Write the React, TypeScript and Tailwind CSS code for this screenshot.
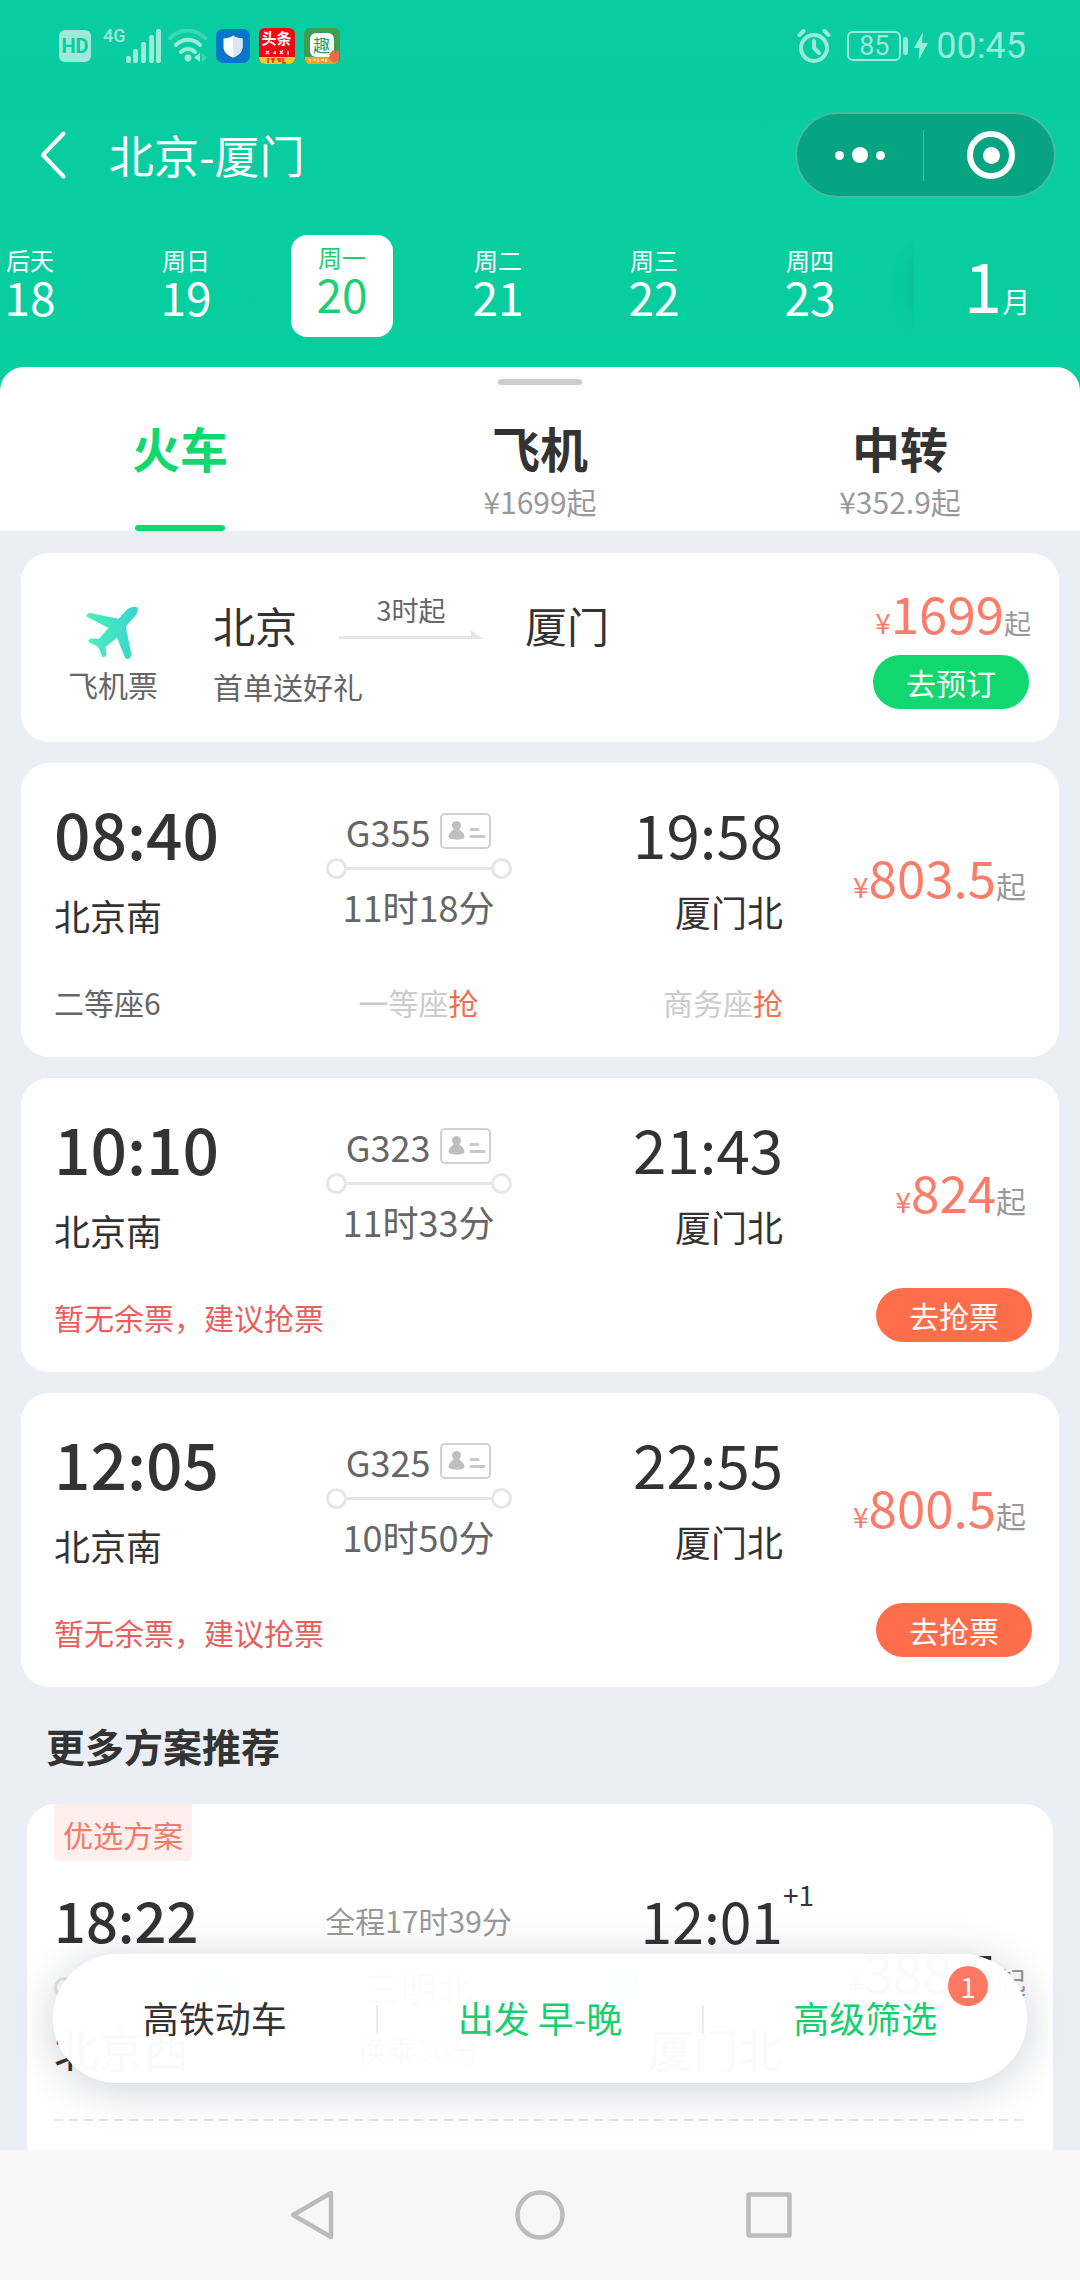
import { useState } from 'react';
import clsx from 'clsx';

type Seat = {
  name: string;
  left?: number;
};

type Train = {
  no: string;
  depart: string;
  from: string;
  arrive: string;
  to: string;
  duration: string;
  price: string;
  seats: Seat[];
};

const days = [
  { label: '后天', day: 18 },
  { label: '周日', day: 19 },
  { label: '周一', day: 20 },
  { label: '周二', day: 21 },
  { label: '周三', day: 22 },
  { label: '周四', day: 23 },
];

const tabs = [
  { name: '火车', sub: '' },
  { name: '飞机', sub: '¥1699起' },
  { name: '中转', sub: '¥352.9起' },
];

const trains: Train[] = [
  {
    no: 'G355',
    depart: '08:40',
    from: '北京南',
    arrive: '19:58',
    to: '厦门北',
    duration: '11时18分',
    price: '803.5',
    seats: [{ name: '二等座', left: 6 }, { name: '一等座' }, { name: '商务座' }],
  },
  {
    no: 'G323',
    depart: '10:10',
    from: '北京南',
    arrive: '21:43',
    to: '厦门北',
    duration: '11时33分',
    price: '824',
    seats: [],
  },
  {
    no: 'G325',
    depart: '12:05',
    from: '北京南',
    arrive: '22:55',
    to: '厦门北',
    duration: '10时50分',
    price: '800.5',
    seats: [],
  },
];

const StatusBar = () => (
  <div className="flex h-[92px] items-center justify-between pr-[54px] pl-[59px] text-white/60">
    <div className="flex items-center">
      <span className="flex h-8 w-8 items-center justify-center rounded-md bg-white/60 font-['Roboto',sans-serif] text-[20px] leading-none font-bold text-[#08cda0]">
        HD
      </span>
      <span className="ml-3 self-start font-['Roboto',sans-serif] text-[18px] leading-4 font-medium">4G</span>
      <svg className="h-[34px] w-9" viewBox="0 0 36 34" fill="currentColor">
        <rect x="0" y="27" width="5" height="7" rx="2" />
        <rect x="7" y="20" width="5" height="14" rx="2" />
        <rect x="15" y="13" width="5" height="21" rx="2" />
        <rect x="23" y="6" width="5" height="28" rx="2" />
        <rect x="30" y="0" width="5" height="34" rx="2" />
      </svg>
      <svg className="ml-1.5 h-[34px] w-10" viewBox="0 0 40 34" fill="none" stroke="currentColor" strokeWidth="4" strokeLinecap="round">
        <path d="M2 9C12-1 27-1 37 9" opacity="0.35" />
        <path d="M8 16c7-7 17-7 24 0" />
        <path d="M13 23c4-4 10-4 14 0" />
        <circle cx="20" cy="29" r="3.4" fill="currentColor" stroke="none" />
        <path d="M32 24v9l-6-4.500z" fill="currentColor" stroke="none" />
        <path d="M34 24v9l5-4.500z" fill="currentColor" stroke="none" opacity="0.35" />
      </svg>
      <svg className="ml-2 h-[34px] w-[34px]" viewBox="0 0 34 34">
        <rect width="34" height="34" rx="7" fill="#0576c9" />
        <path d="M17 6.500c3 2.200 6 3 9.500 3V18c0 5-4 8.500-9.500 10.500C11.500 26.500 7.500 23 7.500 18V9.500c3.500 0 6.500-.8 9.500-3z" fill="#fff" />
        <path d="M17 6.500c3 2.200 6 3 9.500 3V18c0 5-4 8.500-9.500 10.500z" fill="#dbe6f3" />
      </svg>
      <span className="ml-[9px] flex h-9 w-9 flex-col items-center overflow-hidden rounded-md bg-[#ee0a12] text-white">
        <span className="text-[15px] leading-5 font-bold">头条</span>
        <svg className="w-full" viewBox="0 0 36 16">
          <path d="M7 3l3 3M10 3l-3 3M14 5h3M16 3v3M21 3l3 3M24 2l-3 4M29 3v4" stroke="#fff" strokeWidth="1.200" />
          <rect y="9" width="36" height="7" fill="#ffc736" />
          <path d="M9 10v5M12 11h4M14 11v4M18 11h4M19 13h3M24 10v5h3" stroke="#e3261b" strokeWidth="1.500" fill="none" />
        </svg>
      </span>
      <span className="relative ml-[9px] flex h-9 w-9 justify-center rounded-md bg-[#3f9c50] pt-[5px]">
        <span className="h-6 w-6 rounded-md bg-white text-center text-[17px] leading-6 text-[#2f9b4f]">趣</span>
        <svg className="absolute inset-x-0 bottom-0 w-full" viewBox="0 0 36 16">
          <path d="M1 9h28l5 2v3l-3 2H4l-3-3z" fill="#f2a32b" />
          <path d="M26 5l3-3 2 2 4-1v9l-5 3-5-4z" fill="#ee6a45" />
          <path d="M6 11v3M9 12h3M14 11v3M17 12h3M22 11v3" stroke="#fff" strokeWidth="1.200" />
        </svg>
      </span>
    </div>
    <div className="flex items-center">
      <svg className="h-[34px] w-[34px]" viewBox="0 0 34 34" fill="none" stroke="currentColor" strokeWidth="4" strokeLinecap="round">
        <circle cx="17" cy="19" r="13" />
        <path d="M17 12v7l5 5" />
        <path d="M2.500 6l4-4M31.500 6l-4-4" />
      </svg>
      <span className="ml-4 flex h-[30px] w-[54px] items-center justify-center rounded-md border-2 border-white/60 font-['Roboto',sans-serif] text-[27px] leading-none">
        85
      </span>
      <span className="ml-0.5 h-[18px] w-[5px] rounded-sm bg-white/60" />
      <svg className="ml-1.5 h-7 w-[14px]" viewBox="0 0 14 28" fill="currentColor">
        <path d="M9 0L0 16h5.500L4.500 28 14 11H8z" />
      </svg>
      <span className="ml-2 font-['Roboto',sans-serif] text-[36px] leading-none">00:45</span>
    </div>
  </div>
);

const TitleBar = () => (
  <div className="flex h-[126px] items-center pr-6 pl-10 text-white">
    <button aria-label="返回">
      <svg className="block h-12 w-[26px]" viewBox="0 0 26 48" fill="none" stroke="currentColor" strokeWidth="4" strokeLinecap="round" strokeLinejoin="round">
        <path d="M23.500 2.500L3 24l20.500 21.500" />
      </svg>
    </button>
    <h1 className="ml-[43px] text-[45px] leading-[60px]">北京-厦门</h1>
    <div className="ml-auto flex h-[86px] w-[261px] items-center rounded-full border-2 border-white/25 bg-black/20">
      <button aria-label="更多" className="flex flex-1 items-center justify-center gap-2">
        <i className="h-[9px] w-[9px] rounded-full bg-white" />
        <i className="h-4 w-4 rounded-full bg-white" />
        <i className="h-[9px] w-[9px] rounded-full bg-white" />
      </button>
      <span className="h-[51px] w-px bg-white/25" />
      <button aria-label="关闭" className="flex flex-1 justify-center pl-1">
        <span className="flex h-12 w-12 items-center justify-center rounded-full border-6 border-white">
          <i className="h-[17px] w-[17px] rounded-full bg-white" />
        </span>
      </button>
    </div>
  </div>
);

const IdCardIcon = () => (
  <svg className="h-9 w-[51px]" viewBox="0 0 51 36" fill="none">
    <rect x="1" y="1" width="49" height="34" rx="4" stroke="#d0d0d0" strokeWidth="2" />
    <circle cx="16.500" cy="12.500" r="4.500" fill="#bfbfbf" />
    <path d="M14.500 15h4c.3 2 6 4 6 9 0 3.500-16 3.500-16 0 0-5 5.700-7 6-9z" fill="#bfbfbf" />
    <path d="M31 16.500h7M31 23.500h13" stroke="#c8c8c8" strokeWidth="3" strokeLinecap="round" />
  </svg>
);

const TransferIcon = () => (
  <svg className="h-9 w-9" viewBox="0 0 36 36" fill="none" stroke="#33d6b0" strokeWidth="4">
    <circle cx="18" cy="18" r="15" />
    <path d="M11 15h14M18 15v8" />
  </svg>
);

const RouteLine = () => (
  <div className="flex w-[186px] items-center">
    <i className="h-[21px] w-[21px] rounded-full border-3 border-[#e6e6e6]" />
    <i className="h-[3px] flex-1 bg-[#e6e6e6]" />
    <i className="h-[21px] w-[21px] rounded-full border-3 border-[#e6e6e6]" />
  </div>
);

const FlightCard = () => (
  <article className="flex rounded-[28px] bg-white pt-[29px] pr-[30px] pb-[33px] pl-[33px]">
    <div className="mt-6 flex w-[118px] flex-col items-center">
      <svg className="h-[54px] w-[54px]" viewBox="0 0 54 54">
        <defs>
          <linearGradient id="plane" x1="0" y1="0" x2="1" y2="0">
            <stop offset="0" stopColor="#4fefb6" />
            <stop offset="0.700" stopColor="#3cdccb" />
            <stop offset="1" stopColor="#3ad6cf" />
          </linearGradient>
        </defs>
        <path
          fill="url(#plane)"
          d="M.5 10.500C0 9 2 7 4 7L32.500 12.700 41 3.500C44 .8 49 0 51 1.200 52.500 2.600 52 6 50 9L39.800 20.500 45.400 48.500C45.400 50.500 43.500 53 42 53 40.500 53 39.500 52.500 39 51.500L31 31.700 19.300 41C20 44 20.800 46 20.300 48 19.500 51 17.500 51.500 16.500 51 14.500 48 14.500 44 11.700 41 8.500 37.800 4 38 2.400 35.300 2.400 33.500 4 32.700 5 32.700 8 32 10.500 33.200 12.900 32.700L22.400 22z"
        />
      </svg>
      <span className="mt-1.5 text-[30px] leading-9 text-[#666]">飞机票</span>
    </div>
    <div className="mt-3 ml-[41px] flex-1">
      <div className="flex items-center text-[42px] leading-[60px]">
        <span>北京</span>
        <span className="mx-[42px] flex w-[144px] flex-col items-center pb-4">
          <span className="text-[27px] leading-8 text-[#666]">3时起</span>
          <svg className="mt-1 h-[10px] w-full" viewBox="0 0 144 10" fill="#e6e6e6">
            <path d="M0 6h132V0l12 9H0z" />
          </svg>
        </span>
        <span>厦门</span>
      </div>
      <p className="mt-3 text-[30px] leading-9 text-[#666]">首单送好礼</p>
    </div>
    <div className="flex flex-col items-end">
      <p className="-mr-0.5 flex items-baseline text-[51px] leading-[60px] text-[#fb7d69]">
        <span className="text-[28px] leading-none">¥</span>
        1699
        <span className="text-[27px] leading-none text-[#999]">起</span>
      </p>
      <button className="mt-[13px] h-[54px] w-[156px] rounded-full bg-[#10d86e] text-[30px] leading-none text-white">去预订</button>
    </div>
  </article>
);

const TrainCard = ({ train }: { train: Train }) => (
  <article className="rounded-[28px] bg-white px-[33px] pt-[33px] pb-7">
    <div className="grid grid-cols-4">
      <div>
        <p className="text-[64px] leading-[72px] font-medium">{train.depart}</p>
        <p className="mt-[23px] text-[36px] leading-[48px]">{train.from}</p>
      </div>
      <div className="flex flex-col items-center pt-[11px] text-[36px] leading-[48px] text-[#666]">
        <div className="flex items-center gap-2.5">
          {train.no}
          <IdCardIcon />
        </div>
        <div className="my-[3px]">
          <RouteLine />
        </div>
        <p>{train.duration}</p>
      </div>
      <div className="pt-px text-right">
        <p className="text-[60px] leading-[72px]">{train.arrive}</p>
        <p className="mt-[18px] text-[36px] leading-[48px]">{train.to}</p>
      </div>
      <p className="mt-11 flex items-baseline justify-end text-[51px] leading-[72px] text-[#fb7d69]">
        <span className="text-[28px] leading-none">¥</span>
        {train.price}
        <span className="text-[30px] leading-none text-[#999]">起</span>
      </p>
    </div>
    {train.seats.length > 0 ? (
      <div className="mt-9 grid grid-cols-4 text-[30px] leading-[54px]">
        {train.seats.map((seat, i) => (
          <span
            key={seat.name}
            className={clsx(seat.left ? 'text-[#666]' : 'text-[#ccc]', i === 1 && 'text-center', i === 2 && 'text-right')}
          >
            {seat.name}
            {seat.left ?? <em className="text-[#f2714f] not-italic">抢</em>}
          </span>
        ))}
      </div>
    ) : (
      <div className="mt-[34px] -mr-1.5 flex items-start justify-between text-[30px]">
        <span className="pt-0.5 leading-[54px] text-[#e8605c]">暂无余票，建议抢票</span>
        <button className="h-[54px] w-[156px] rounded-full bg-[#ff6e4a] leading-none text-white">去抢票</button>
      </div>
    )}
  </article>
);

const PlanCard = () => (
  <article className="mx-1.5 rounded-t-[28px] bg-white px-[27px] pb-10">
    <span className="inline-block h-[57px] rounded-b-md bg-[#fff0ee] px-[9px] align-top text-[30px] leading-[60px] text-[#f67a68]">
      优选方案
    </span>
    <div className="mt-[25px] grid grid-cols-4">
      <p className="text-[56px] leading-[66px] font-medium">18:22</p>
      <p className="text-center text-[30px] leading-[69px] text-[#999]">全程17时39分</p>
      <p className="relative text-right text-[57px] leading-[66px]">
        12:01
        <sup className="absolute -top-1.5 left-full text-[28px] leading-none">+1</sup>
      </p>
    </div>
    <div className="mt-2 grid grid-cols-4 items-center text-[36px] leading-[48px] text-[#666]">
      <div className="flex items-center justify-between pr-[65px]">
        <i className="h-[21px] w-[21px] rounded-full border-3 border-[#e6e6e6]" />
        <TransferIcon />
      </div>
      <span className="text-center">三明北</span>
      <div className="pl-[65px]">
        <TransferIcon />
      </div>
      <p className="-mt-4 flex items-baseline justify-end self-start text-[53px] leading-[48px] text-[#333]">
        <span className="text-[28px] leading-none">¥</span>
        388.5
        <span className="text-[30px] leading-none text-[#999]">起</span>
      </p>
    </div>
    <div className="mt-2 grid grid-cols-4 text-[45px] leading-[60px]">
      <span>北京西</span>
      <span className="text-center text-[30px] text-[#666]">换乘30分</span>
      <span className="text-right">厦门北</span>
    </div>
    <div className="mt-10 h-0.5 bg-[repeating-linear-gradient(90deg,#e6e6e6_0_9px,transparent_9px_15px)]" />
  </article>
);

const FilterBar = () => (
  <div className="absolute inset-x-[53px] bottom-[67px] flex h-[129px] items-center rounded-full bg-white/98 text-[36px] leading-[48px] shadow-[0_6px_45px_rgba(20,30,50,0.2)]">
    <button className="flex-1 pb-1">高铁动车</button>
    <span className="h-7 w-0.5 bg-[#eee]" />
    <button className="flex-1 pb-1 text-[#18cf6f]">出发 早-晚</button>
    <span className="h-7 w-0.5 bg-[#eee]" />
    <button className="flex-1 pb-1 text-[#18cf6f]">高级筛选</button>
    <span className="absolute top-3 right-[39px] flex h-10 w-10 items-center justify-center rounded-full bg-[#ff7863] text-[28px] leading-none text-white">
      1
    </span>
  </div>
);

const SystemNav = () => (
  <nav className="grid h-[130px] grid-cols-3 items-center bg-[#f7f7f7] px-[196px] text-[#bcbcbc]">
    <button aria-label="后退" className="flex justify-center">
      <svg className="h-[52px] w-[46px]" viewBox="0 0 46 52" fill="none" stroke="currentColor" strokeWidth="4.500" strokeLinejoin="round">
        <path d="M43 4v44L5 26z" />
      </svg>
    </button>
    <button aria-label="主屏幕" className="flex justify-center">
      <svg className="h-[52px] w-[52px]" viewBox="0 0 52 52" fill="none" stroke="currentColor" strokeWidth="4.500">
        <circle cx="26" cy="26" r="22.500" />
      </svg>
    </button>
    <button aria-label="最近任务" className="flex justify-center">
      <svg className="h-[52px] w-[52px]" viewBox="0 0 52 52" fill="none" stroke="currentColor" strokeWidth="4.500" strokeLinejoin="round">
        <rect x="5.500" y="5.500" width="41" height="41" rx="1" />
      </svg>
    </button>
  </nav>
);

const App = () => {
  const [activeDay, setActiveDay] = useState(20);
  const [activeTab, setActiveTab] = useState('火车');

  return (
    <div className="flex h-screen flex-col overflow-hidden bg-[#ebeff5] font-[family-name:'Noto_Sans_CJK_SC',sans-serif] text-[#333]">
      <header className="shrink-0 bg-linear-to-b from-[#09cca2] to-[#06cf9c]">
        <StatusBar />
        <TitleBar />
        <div className="flex pt-[17px] pb-[30px] text-white">
          <div className="flex flex-1 overflow-hidden">
            <div className="-ml-12 flex">
              {days.map((d) => (
                <button key={d.day} onClick={() => setActiveDay(d.day)} className="flex w-[156px] shrink-0 justify-center">
                  <span
                    className={clsx(
                      'flex h-[102px] w-[102px] flex-col items-center rounded-2xl',
                      d.day === activeDay ? 'bg-white pt-2 text-[#1ecf71]' : 'pt-[11px]'
                    )}
                  >
                    <span className="text-[24px] leading-7">{d.label}</span>
                    <span className="text-[46px] leading-11">{d.day}</span>
                  </span>
                </button>
              ))}
            </div>
            <i className="ml-auto w-6 bg-[radial-gradient(ellipse_at_right,rgba(0,0,0,0.06),transparent_70%)]" />
          </div>
          <button className="flex w-[166px] items-baseline justify-center pt-3 text-[69px] leading-[72px]">
            1<span className="text-[28px] leading-none">月</span>
          </button>
        </div>
        <div className="rounded-t-3xl bg-white pt-3">
          <i className="mx-auto block h-1.5 w-[84px] rounded-full bg-[#ccc]" />
          <div className="grid grid-cols-3 pt-8" role="tablist">
            {tabs.map((tab) => (
              <button
                key={tab.name}
                role="tab"
                aria-selected={tab.name === activeTab}
                onClick={() => setActiveTab(tab.name)}
                className="flex flex-col items-center"
              >
                <span className={clsx('text-[48px] leading-[60px] font-bold', tab.name === activeTab && 'text-[#10d86e]')}>
                  {tab.name}
                </span>
                <span className="mt-1.5 mb-1.5 h-9 text-[30px] leading-9 text-[#999]">{tab.sub}</span>
                <i className={clsx('h-1.5 w-[90px] rounded-full', tab.name === activeTab && 'bg-[#10d86e]')} />
              </button>
            ))}
          </div>
        </div>
      </header>

      <div className="relative min-h-0 flex-1">
        <main className="flex h-full flex-col gap-[21px] overflow-hidden px-[21px] pt-[22px]">
          <FlightCard />
          {trains.map((train) => (
            <TrainCard key={train.no} train={train} />
          ))}
          <section>
            <h2 className="mt-[7px] mb-[29px] ml-[25px] text-[39px] leading-[60px] font-bold">更多方案推荐</h2>
            <PlanCard />
          </section>
        </main>
        <FilterBar />
      </div>
      <SystemNav />
    </div>
  );
};

export default App;
